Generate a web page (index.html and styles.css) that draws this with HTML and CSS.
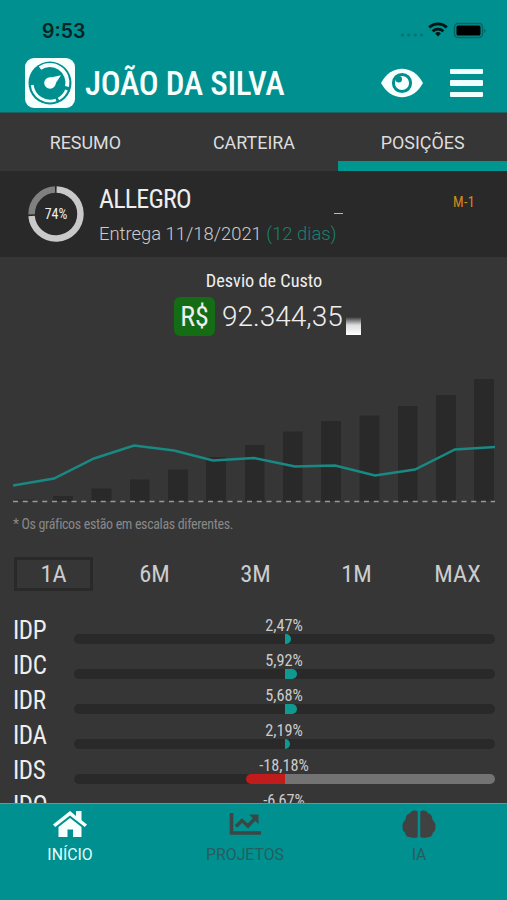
FILE: index.html
```
<!DOCTYPE html>
<html lang="pt-BR">
<head>
  <meta charset="UTF-8">
  <meta name="viewport" content="width=device-width, initial-scale=1.0">
  <title>Posições</title>
  <link rel="stylesheet" href="styles.css">
</head>
<body>
  <div class="app">

    <header>
      <div class="status-bar">
        <span class="time">9:53</span>
        <svg width="88" height="20" viewBox="0 0 88 20">
          <g fill="#08706f">
            <circle cx="3.500" cy="15" r="1.600"/><circle cx="9.800" cy="15" r="1.600"/><circle cx="16.200" cy="15" r="1.600"/><circle cx="22.500" cy="15" r="1.600"/>
          </g>
          <g fill="none" stroke="#001514" stroke-width="2.8">
            <path d="M30.2 7.4a13 13 0 0 1 17.6 0"/>
            <path d="M33.6 11.2a8 8 0 0 1 10.8 0"/>
          </g>
          <path d="M36.1 13.4a4.2 4.2 0 0 1 5.8 0L39 16.6z" fill="#001514"/>
          <rect x="55.500" y="3.500" width="28" height="14" rx="3.500" fill="none" stroke="#086362" stroke-width="1.500"/>
          <rect x="57.500" y="5.500" width="24" height="10" rx="1.500" fill="#000"/>
          <path d="M85.500 8.500v4.500q2-2 0-4.500z" fill="#08504f"/>
        </svg>
      </div>
      <div class="title-bar">
        <svg class="logo" width="50" height="50" viewBox="0 0 50 50">
          <rect width="50" height="50" rx="9" fill="#f7ffff"/>
          <circle cx="25" cy="25" r="21.500" fill="#008f8f"/>
          <g fill="none" stroke="#f7ffff">
            <path d="M15 10.200A17.500 17.500 0 0 1 42 28.500" stroke-width="4"/>
            <path d="M41.500 32A18 18 0 0 1 33.500 41" stroke-width="2.800"/>
            <path d="M31 42A18 18 0 0 1 7.200 27" stroke-width="2.800"/>
          </g>
          <circle cx="25" cy="25" r="5.800" fill="#f7ffff"/>
          <path d="M24.500 19.800 36 17.200 29.500 27z" fill="#f7ffff"/>
        </svg>
        <h1><span class="narrow">JOÃO DA SILVA</span></h1>
        <svg class="eye" width="42" height="30" viewBox="0 0 42 30">
          <path d="M0 15C10-4 32-4 42 15 32 34 10 34 0 15z" fill="#f7ffff"/>
          <circle cx="21" cy="15" r="8.600" fill="#f7ffff" stroke="#008f8f" stroke-width="3"/>
          <circle cx="17.800" cy="11.300" r="3.200" fill="#008f8f"/>
        </svg>
        <div class="menu"><i></i><i></i><i></i></div>
      </div>
    </header>

    <nav class="tabs">
      <span>RESUMO</span>
      <span>CARTEIRA</span>
      <span class="active">POSIÇÕES</span>
    </nav>

    <section class="project">
      <svg class="ring" width="56" height="56" viewBox="0 0 56 56">
        <g fill="none" stroke-width="6.500">
          <path d="M28.600 3.500A24.500 24.500 0 1 1 3.550 30" stroke="#c9c9c9"/>
          <path d="M3.600 28.400A24.500 24.500 0 0 1 27 3.500" stroke="#808080"/>
        </g>
        <text class="narrow" x="28" y="32.500" text-anchor="middle">74%</text>
      </svg>
      <div class="info">
        <h2><span class="narrow">ALLEGRO</span></h2>
        <p>Entrega 11/18/2021 <em>(12 dias)</em></p>
      </div>
      <span class="dash"></span>
      <span class="month"><span class="narrow">M-1</span></span>
    </section>

    <main>
      <h3><span class="narrow">Desvio de Custo</span></h3>
      <div class="amount">
        <span class="currency"><span class="narrow">R$</span></span>
        <span class="value">92.344,35</span>
        <span class="block"></span>
      </div>

      <svg class="chart" width="483" height="130" viewBox="0 0 483 130">
        <g fill="#292929">
          <rect x="1.500" y="121" width="20" height="2" fill="#303030"/>
          <rect x="40" y="118" width="20" height="5"/>
          <rect x="78.500" y="110.500" width="20" height="12.500"/>
          <rect x="117" y="101.500" width="19.500" height="21.500"/>
          <rect x="155" y="91.500" width="20" height="31.500"/>
          <rect x="193" y="79" width="20" height="44"/>
          <rect x="232" y="67" width="19.500" height="56"/>
          <rect x="270" y="53.500" width="19.500" height="69.500"/>
          <rect x="308" y="43" width="20" height="80"/>
          <rect x="346.500" y="37.500" width="20" height="85.500"/>
          <rect x="385" y="28" width="19.500" height="95"/>
          <rect x="423" y="17" width="20" height="106"/>
          <rect x="461" y="1" width="20" height="122"/>
        </g>
        <line x1="0" y1="123.500" x2="482" y2="123.500" stroke="#999" stroke-width="1.300" stroke-dasharray="5 4.750"/>
        <polyline points="0,107.500 41,100.500 81,80.500 121,67.500 161,72.500 200,82.500 241,80 282,88.500 322,87.500 362,97.500 402,91.500 442,71.500 482,69" fill="none" stroke="#198983" stroke-width="2.500"/>
      </svg>
      <p class="note"><span class="narrow">* Os gráficos estão em escalas diferentes.</span></p>

      <div class="periods">
        <span class="selected"><b class="narrow">1A</b></span>
        <span><b class="narrow">6M</b></span>
        <span><b class="narrow">3M</b></span>
        <span><b class="narrow">1M</b></span>
        <span><b class="narrow">MAX</b></span>
      </div>

      <div class="indexes">
        <div class="row">
          <label><span class="narrow">IDP</span></label>
          <div class="gauge"><span class="narrow">2,47%</span><div class="track"><i class="up" style="width: 6px"></i></div></div>
        </div>
        <div class="row">
          <label><span class="narrow">IDC</span></label>
          <div class="gauge"><span class="narrow">5,92%</span><div class="track"><i class="up" style="width: 12px"></i></div></div>
        </div>
        <div class="row">
          <label><span class="narrow">IDR</span></label>
          <div class="gauge"><span class="narrow">5,68%</span><div class="track"><i class="up" style="width: 12px"></i></div></div>
        </div>
        <div class="row">
          <label><span class="narrow">IDA</span></label>
          <div class="gauge"><span class="narrow">2,19%</span><div class="track"><i class="up" style="width: 5px"></i></div></div>
        </div>
        <div class="row">
          <label><span class="narrow">IDS</span></label>
          <div class="gauge"><span class="narrow">-18,18%</span><div class="track negative"><i class="down" style="width: 39px"></i></div></div>
        </div>
        <div class="row">
          <label><span class="narrow">IDQ</span></label>
          <div class="gauge"><span class="narrow">-6,67%</span><div class="track negative"><i class="down" style="width: 14px"></i></div></div>
        </div>
      </div>
    </main>

    <footer>
      <div class="item active">
        <svg width="34" height="28" viewBox="0 0 34 28" fill="#f7ffff">
          <path d="M0 14.500 17 1l6 4.900V1h5.500v9.300l5.500 4.200-2.200 2.600L17 5.500 2.200 17.100z"/>
          <path d="M5.500 17 17 8l11.500 9v10H20v-7.500h-5.500V27h-9z"/>
        </svg>
        <span>INÍCIO</span>
      </div>
      <div class="item">
        <svg width="34" height="28" viewBox="0 0 34 28">
          <path d="M3.500 3v20H33" fill="none" stroke="#3d4545" stroke-width="3.600"/>
          <path d="M8 16.500 14 10.500l6 5.500 7-7.500" fill="none" stroke="#3d4545" stroke-width="3.400"/>
          <path d="M21 4.500h9.500V14z" fill="#3d4545"/>
        </svg>
        <span>PROJETOS</span>
      </div>
      <div class="item">
        <svg width="34" height="28" viewBox="0 0 34 28" fill="#414141">
          <path d="M15.700 1.200C12-.5 9 1 8 3.200 5 4 3.500 6.500 3.600 9.500 1.500 12 0 14 .6 17c-.3 3 1 4.500 2.500 5.500C3.500 26 6 27.500 8.800 27.300c2 1 5.200.7 6.900-.3z"/>
          <path d="M18.300 1.200C22-.5 25 1 26 3.200c3 .8 4.500 3.300 4.400 6.300 2.100 2.500 3.600 4.500 3 7.500.3 3-1 4.500-2.500 5.500-.4 3.500-2.900 5-5.700 4.800-2 1-5.200.7-6.900-.3z"/>
        </svg>
        <span>IA</span>
      </div>
    </footer>

  </div>
</body>
</html>
```
FILE: styles.css
```
* {
  box-sizing: border-box;
}

body {
  margin: 0;
  font-family: Roboto, sans-serif;
  background-color: #363636;
  color: #eee;
}

h1, h2, h3, p {
  margin: 0;
  font-weight: normal;
}

.app {
  width: 507px;
  height: 900px;
  display: flex;
  flex-direction: column;
  overflow: hidden;
}

.narrow {
  font-family: "Roboto Condensed", Roboto, sans-serif;
  font-stretch: 75%;
  display: inline-block;
  font-weight: inherit;
}

/* Header */
header {
  height: 113px;
  flex: none;
  background-color: #009090;
  border-bottom: 1px solid #1c6464;
}

.status-bar {
  height: 58px;
  padding: 20px 20px 0 42px;
  display: flex;
  justify-content: space-between;
}

.time {
  font-family: Inter, sans-serif;
  font-size: 19.5px;
  line-height: 22px;
  font-weight: 600;
  color: #062423;
}

.title-bar {
  height: 50px;
  padding: 0 24px 0 25px;
  display: flex;
  align-items: center;
}

h1 {
  margin-left: 10px;
  flex: 1;
  font-size: 33px;
  line-height: 51px;
  font-weight: 500;
  letter-spacing: -0.3px;
  white-space: nowrap;
  color: #f7ffff;
}

.menu {
  width: 33px;
  margin-left: 27px;
  display: flex;
  flex-direction: column;
  gap: 6px;
}

.menu i {
  height: 5.5px;
  border-radius: 1px;
  background-color: #f0ffff;
}

/* Tabs */
.tabs {
  height: 58px;
  flex: none;
  padding-left: 1px;
  display: grid;
  grid-template-columns: repeat(3, 1fr);
}

.tabs span {
  padding-top: 18px;
  text-align: center;
  font-size: 17.9px;
  line-height: 23px;
  color: #ddd;
}

.tabs .active {
  border-bottom: 10px solid #009690;
}

/* Project */
.project {
  height: 86px;
  flex: none;
  padding-left: 28px;
  display: flex;
  background-color: #292929;
}

.ring {
  margin-top: 15px;
}

.ring text {
  font-size: 14px;
  fill: #eee;
}

.info {
  width: 240px;
  margin-left: 15px;
  padding-top: 13px;
  white-space: nowrap;
}

h2 {
  font-size: 26px;
  line-height: 31px;
  letter-spacing: -0.8px;
}

.info p {
  margin-top: 7px;
  font-size: 18.4px;
  line-height: 24px;
  font-weight: 300;
  color: #ccc;
}

.info em {
  font-style: normal;
  color: #19806f;
}

.dash {
  width: 9px;
  height: 1px;
  margin: 42px 0 0 -5px;
  background-color: #bbb;
}

.month {
  margin: 21px 0 0 110px;
  font-size: 14px;
  line-height: 20px;
  letter-spacing: 0.3px;
  color: #d48a1c;
}

/* Cost */
main {
  height: 546px;
  flex: none;
  padding: 12px 12px 0 13px;
  overflow: hidden;
}

h3 {
  padding-left: 20px;
  text-align: center;
  font-size: 18.3px;
  line-height: 23px;
}

.amount {
  height: 40px;
  margin-top: 5px;
  padding-left: 161px;
  display: flex;
}

.currency {
  width: 41px;
  height: 39px;
  border-radius: 6px;
  background-color: #146c14;
  text-align: center;
  font-size: 28px;
  line-height: 39px;
}

.value {
  margin-left: 7px;
  font-size: 28px;
  line-height: 40px;
  font-weight: 300;
}

.block {
  width: 15px;
  height: 18px;
  margin: 20px 0 0 3px;
  background: linear-gradient(#363636, #ddd 45%, #fff);
}

.chart {
  display: block;
  margin-top: 41px;
}

.note {
  margin-top: 6px;
  font-size: 14px;
  line-height: 20px;
  letter-spacing: -0.35px;
  color: #888;
}

.periods {
  height: 34px;
  margin: 23px -2px 24px 1px;
  display: flex;
  justify-content: space-between;
}

.periods span {
  width: 79px;
  border: 3px solid transparent;
  text-align: center;
  font-size: 24.5px;
  line-height: 27px;
  color: #ccc;
}

.periods .selected {
  border-color: #292929;
}

/* Indexes */
.row {
  height: 35px;
  display: grid;
  grid-template-columns: 61px 1fr;
}

.row label {
  font-size: 25px;
  line-height: 32px;
  letter-spacing: -0.4px;
}

.gauge {
  text-align: center;
  font-size: 16.3px;
  line-height: 22px;
  color: #ccc;
}

.gauge .narrow {
  display: block;
  height: 19px;
  padding-right: 1px;
}

.track {
  height: 10px;
  display: grid;
  grid-template-columns: 1fr 1fr;
  border-radius: 5px;
  background-color: #292929;
  overflow: hidden;
}

.track.negative {
  background: linear-gradient(to right, #292929 50%, #737373 50%);
}

.track i {
  height: 10px;
}

.up {
  grid-column: 2;
  border-radius: 0 5px 5px 0;
  background-color: #109990;
}

.down {
  justify-self: end;
  border-radius: 5px 0 0 5px;
  background-color: #c01c1c;
}

/* Footer */
footer {
  flex: 1;
  padding-top: 6px;
  display: flex;
  background-color: #009090;
  border-top: 1px solid #50a09d;
}

.item {
  width: 210px;
  display: flex;
  flex-direction: column;
  align-items: center;
  font-size: 15.8px;
  line-height: 20px;
  color: #245e5e;
}

.item:first-child {
  width: 140px;
}

.item:last-child {
  width: 138px;
}

.item span {
  margin-top: 7px;
}

.item.active {
  color: #e0ffff;
}
```
